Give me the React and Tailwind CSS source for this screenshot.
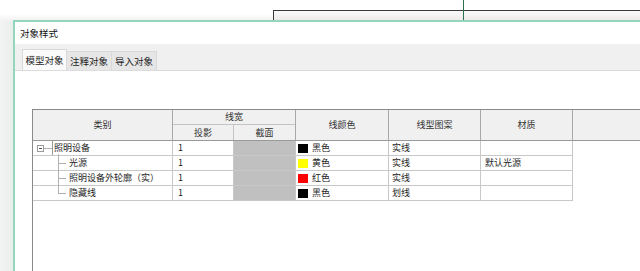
import React from "react";

const font = { fontFamily: '"Noto Sans CJK SC", "Noto Sans", sans-serif' };

const rows = [
  { name: "照明设备", level: 0, color: "#000000", colorName: "黑色", pattern: "实线", material: "" },
  { name: "光源", level: 1, color: "#ffff00", colorName: "黄色", pattern: "实线", material: "默认光源" },
  { name: "照明设备外轮廓（实）", level: 1, color: "#ff0000", colorName: "红色", pattern: "实线", material: "" },
  { name: "隐藏线", level: 1, color: "#000000", colorName: "黑色", pattern: "划线", material: "", last: true },
];

// tree connector for the 类别 column
const TreeLines = ({ row }) => {
  if (row.level === 0) {
    return (
      <svg width="40" height="15" className="absolute left-0 top-0">
        <rect x="4.5" y="4.5" width="6" height="6" fill="white" stroke="#9a9a9a" />
        <line x1="6" y1="7.5" x2="9" y2="7.5" stroke="#555" />
        <line x1="11" y1="7.5" x2="19" y2="7.5" stroke="#b0b0b0" />
        <line x1="25.5" y1="15" x2="25.5" y2="13" stroke="#b0b0b0" />
      </svg>
    );
  }
  return (
    <svg width="40" height="15" className="absolute left-0 top-0">
      <line x1="25.5" y1="0" x2="25.5" y2={row.last ? 7.5 : 15} stroke="#b0b0b0" />
      <line x1="25" y1="7.5" x2="33" y2="7.5" stroke="#b0b0b0" />
    </svg>
  );
};

export default function App() {
  return (
    <div className="relative w-[640px] h-[271px] overflow-hidden bg-white text-[9px] text-[#1e1e1e]" style={font}>
      {/* window behind the dialog */}
      <div className="absolute left-[273px] top-[10px] right-0 h-[11px] border-l border-t border-[#3a3a3a] bg-gradient-to-b from-[#fbfafa] to-[#ece8e8]" />
      <div className="absolute left-[463px] top-0 w-px h-[20px] bg-[#2f6e4c]" />
      <div className="absolute left-0 top-[14px] w-[273px] h-[7px] bg-gradient-to-b from-white to-[#f1f1f1]" />
      <div className="absolute left-0 top-[21px] w-[13px] bottom-0 bg-gradient-to-r from-[#f3f3f3] to-[#e9efec]" />

      {/* dialog */}
      <div className="relative ml-[13px] mt-[20px] w-[640px] h-[260px] border-l-2 border-t-2 border-[#93d6bb] bg-white flex flex-col">
        <div className="h-[22px] pl-[5px] flex items-center text-[9.5px] text-[#111]">对象样式</div>

        <div className="h-[27px] bg-[#f0f0f0] border-b border-[#dcdcdc] flex items-end pl-[7px]">
          <div className="w-[45px] h-[21px] bg-[#fafafa] border-x border-t border-[#d9d9d9] flex items-center justify-center text-[9.5px]">模型对象</div>
          <div className="w-[45px] h-[19px] bg-[#e6e6e6] border-r border-t border-[#d9d9d9] flex items-center justify-center text-[9.5px]">注释对象</div>
          <div className="w-[45px] h-[19px] bg-[#e6e6e6] border-r border-t border-[#d9d9d9] flex items-center justify-center text-[9.5px]">导入对象</div>
        </div>

        <div className="flex-1 pt-[38px] pl-[17px]">
          <div className="h-full border-l border-t border-[#8a8a8a]">
            {/* header */}
            <div className="flex h-[31px] bg-[#f0f0f0] border-b border-[#9a9a9a] text-[#333]">
              <div className="w-[140px] border-r border-[#a8a8a8] flex items-center justify-center">类别</div>
              <div className="w-[123px] border-r border-[#a8a8a8] flex flex-col">
                <div className="h-[15px] border-b border-[#c4c4c4] flex items-center justify-center">线宽</div>
                <div className="flex-1 flex">
                  <div className="w-[61px] border-r border-[#c4c4c4] flex items-center justify-center">投影</div>
                  <div className="flex-1 flex items-center justify-center">截面</div>
                </div>
              </div>
              <div className="w-[93px] border-r border-[#a8a8a8] flex items-center justify-center">线颜色</div>
              <div className="w-[92px] border-r border-[#a8a8a8] flex items-center justify-center">线型图案</div>
              <div className="w-[92px] border-r border-[#a8a8a8] flex items-center justify-center">材质</div>
              <div className="flex-1" />
            </div>

            {/* body */}
            {rows.map((row) => (
              <div key={row.name} className="flex h-[15px] w-[540px] border-b border-[#c8c8c8]">
                <div className="relative w-[140px] border-r border-[#c8c8c8]">
                  <TreeLines row={row} />
                  {row.level === 0 ? (
                    <div className="absolute left-[19px] top-0 h-[14px] pl-[1px] border-l border-[#9a9a9a] flex items-center">{row.name}</div>
                  ) : (
                    <div className="absolute left-[36px] top-0 h-[14px] flex items-center">{row.name}</div>
                  )}
                </div>
                <div className="w-[61px] border-r border-[#c8c8c8] pl-[5px] flex items-center">1</div>
                <div className="w-[62px] border-r border-[#c8c8c8] bg-[#c0c0c0]" />
                <div className="w-[93px] border-r border-[#c8c8c8] flex items-center pl-[2px] gap-[4px]">
                  <span className="w-[10px] h-[9px]" style={{ backgroundColor: row.color }} />
                  <span>{row.colorName}</span>
                </div>
                <div className="w-[92px] border-r border-[#c8c8c8] pl-[3px] flex items-center">{row.pattern}</div>
                <div className="w-[92px] border-r border-[#c8c8c8] pl-[4px] flex items-center">{row.material}</div>
              </div>
            ))}
          </div>
        </div>
      </div>
    </div>
  );
}
